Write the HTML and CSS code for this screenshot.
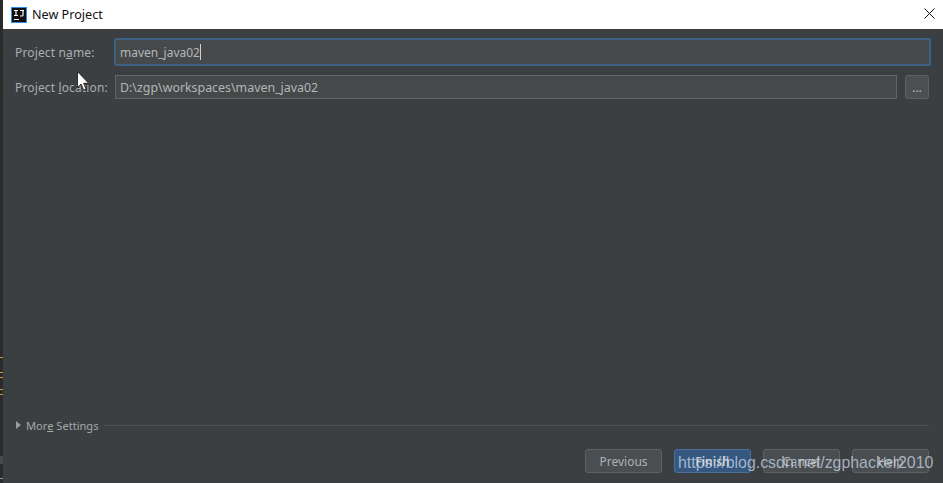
FILE: index.html
```html
<!DOCTYPE html>
<html lang="en">
<head>
<meta charset="utf-8">
<title>New Project</title>
<link rel="stylesheet" href="styles.css">
</head>
<body>
<div class="backdrop">
  <i class="mark m1"></i><i class="mark m2"></i><i class="mark m3"></i><i class="mark m4"></i><i class="mark m5"></i><i class="block"></i><i class="mark m6"></i>
</div>
<div class="dialog">
  <header class="titlebar">
    <svg class="logo" width="16" height="16" viewBox="0 0 16 16"><rect x="0.5" y="0.5" width="15" height="15" fill="#111" stroke="#2d8fe8"/><path d="M3 3.5h4M5 3.5v5M3 8.5h4M9 3.5h4M12 3.5v4.5q0 1-1 1h-2M3 12.5h5" fill="none" stroke="#fff" stroke-width="1.2"/></svg>
    <span class="title">New Project</span>
    <svg class="close" width="11" height="11" viewBox="0 0 11 11"><path d="M0.5 0.5l10 10M10.5 0.5l-10 10" stroke="#111" fill="none"/></svg>
  </header>
  <main class="content">
    <div class="row">
      <label class="label">Project n<u>a</u>me:</label>
      <div class="field focused">maven_java02<span class="caret"></span></div>
    </div>
    <div class="row second">
      <label class="label">Project <u>l</u>ocation:</label>
      <div class="field">D:\zgp\workspaces\maven_java02</div>
      <button class="browse">...</button>
    </div>
    <div class="spacer"></div>
    <div class="more">
      <svg class="tri" width="5" height="8" viewBox="0 0 5 8"><path d="M0 0l5 4-5 4z" fill="#9a9d9f"/></svg>
      <span>Mor<u>e</u> Settings</span>
      <span class="rule"></span>
    </div>
    <div class="buttons">
      <button class="btn">Previous</button>
      <button class="btn primary">Finish</button>
      <button class="btn">Cancel</button>
      <button class="btn">Help</button>
    </div>
  </main>
  <svg class="cursor" width="14" height="20" viewBox="0 0 14 20"><path d="M0.5 0.5v16l3.6-3.4 2.6 6 2.4-1-2.5-5.8h5z" fill="#fff" stroke="#111" stroke-width="0.8"/></svg>
  <div class="watermark">https://blog.csdn.net/zgphacker2010</div>
</div>
</body>
</html>
```
FILE: styles.css
```css
* { box-sizing: border-box; }
html, body { margin: 0; height: 100%; }
body {
  width: 943px;
  height: 483px;
  overflow: hidden;
  display: flex;
  background: #fff;
  font-family: "Liberation Sans", Arial, sans-serif;
}
.backdrop {
  width: 3px;
  height: 100%;
  background: #2b2b2b;
  position: relative;
  flex: none;
}
.mark { position: absolute; left: 0; width: 3px; height: 1px; background: #c9973c; }
.m1 { top: 357px; }
.m2 { top: 372px; }
.m3 { top: 377px; }
.m4 { top: 389px; }
.m5 { top: 394px; }
.m6 { top: 478px; background: #8a93a8; }
.block { position: absolute; left: 0; top: 456px; width: 3px; height: 8px; background: #4a4a4a; }
.dialog {
  position: relative;
  flex: 1;
  display: flex;
  flex-direction: column;
  min-width: 0;
}
.titlebar {
  height: 29px;
  background: #fff;
  display: flex;
  align-items: center;
  padding: 0 8px 0 8px;
  flex: none;
}
.logo { flex: none; }
.title {
  margin-left: 5px;
  font: 12.6px "Noto Sans", sans-serif;
  color: #111;
  flex: 1;
}
.close { flex: none; margin-bottom: 2px; }
.content {
  flex: 1;
  background: #3c3f41;
  padding: 9px 14px 10px 12px;
  display: flex;
  flex-direction: column;
  min-height: 0;
  font: 12px "Noto Sans", sans-serif;
  color: #b4b8ba;
}
.row { display: flex; align-items: center; height: 28px; }
.second { margin-top: 9px; height: 24px; }
.label { width: 100px; flex: none; color: #a9adaf; letter-spacing: 0.14px; }
u { text-underline-offset: 1px; }
.field {
  flex: 1;
  height: 24px;
  background: #45494a;
  border: 1px solid #646464;
  color: #b4b6b8;
  padding-left: 4px;
  display: flex;
  align-items: center;
  font-size: 12.4px;
}
.focused {
  height: 28px;
  margin: 0 -2px 0 -1px;
  border: 2px solid #3d6185;
  border-radius: 2px;
  padding-left: 4px;
  font-size: 12px;
}
.caret { width: 1px; height: 16px; background: #d0d0d0; }
.browse {
  width: 24px;
  height: 24px;
  margin-left: 8px;
  background: #4c5052;
  border: 1px solid #5e6163;
  border-radius: 3px;
  color: #bbb;
  font: 12px "Noto Sans", sans-serif;
  padding: 0;
  flex: none;
}
.spacer { flex: 1; }
.more {
  display: flex;
  align-items: center;
  height: 16px;
  color: #a3a8ab;
  font-size: 11.1px;
}
.tri { margin: 0 5px 0 1px; flex: none; }
.rule { flex: 1; height: 1px; background: #4d5153; margin-left: 6px; }
.buttons {
  display: flex;
  justify-content: flex-end;
  gap: 12px;
  margin-top: 16px;
}
.btn {
  width: 77px;
  height: 24px;
  background: #4a4e50;
  border: 1px solid #5e6163;
  border-radius: 3px;
  color: #aeb2b4;
  font: 12px "Noto Sans", sans-serif;
  padding: 0;
}
.primary {
  background: #365880;
  border-color: #4a709a;
  color: #c8ccd0;
  font-weight: 600;
}
.cursor { position: absolute; left: 74px; top: 71px; }
.watermark {
  position: absolute;
  left: 675px;
  top: 454px;
  font-size: 15.9px;
  color: rgba(205, 220, 232, 0.72);
  white-space: nowrap;
}
```
